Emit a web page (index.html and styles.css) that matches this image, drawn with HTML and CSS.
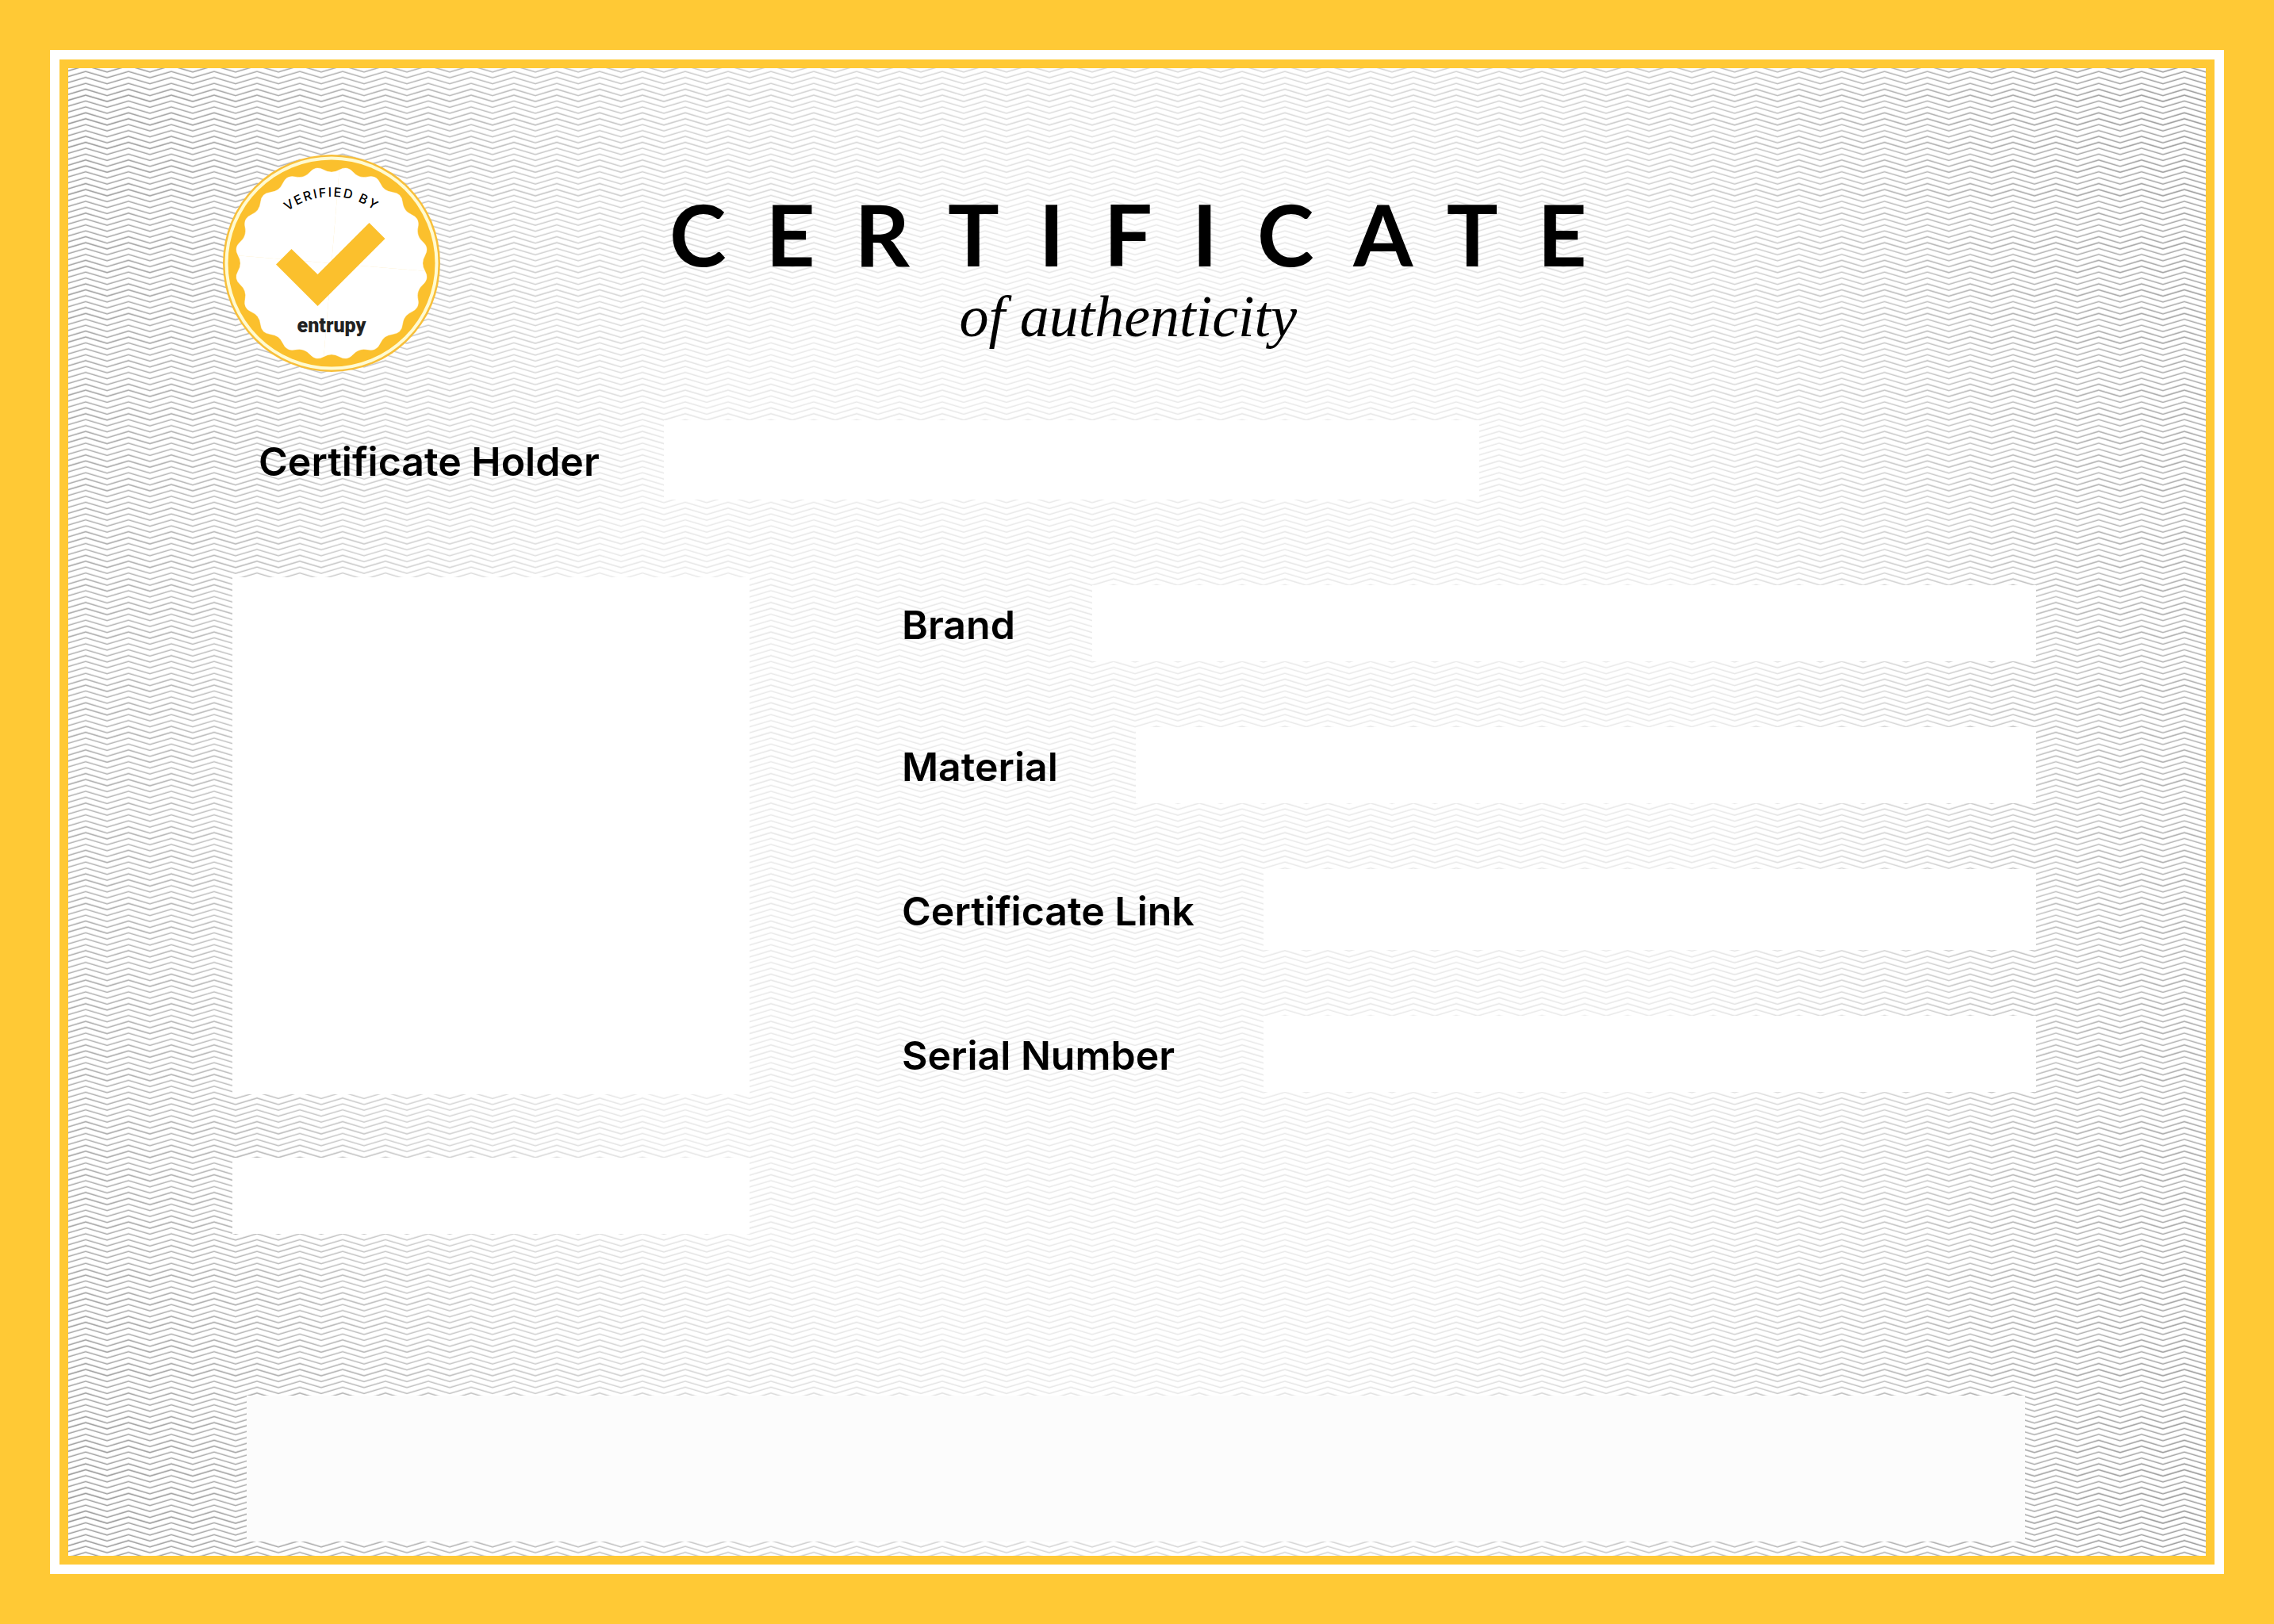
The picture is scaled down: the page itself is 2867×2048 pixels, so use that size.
FILE: index.html
```html
<!DOCTYPE html>
<html lang="en">
<head>
<meta charset="utf-8">
<meta name="viewport" content="width=device-width, initial-scale=1">
<title>Certificate of authenticity</title>
<link rel="stylesheet" href="styles.css">
</head>
<body>
<main class="frame">
  <div class="sheet">
    <svg class="guilloche" aria-hidden="true">
      <defs>
        <pattern id="waves" width="54" height="186" x="22" y="-3.3" patternUnits="userSpaceOnUse">
          <path class="wave" d="M-27 .56l27-8 27 8 27-8 27 8m-108 7.44l27-8 27 8 27-8 27 8m-108 7.44l27-8 27 8 27-8 27 8m-108 7.44l27-8 27 8 27-8 27 8m-108 7.44l27-8 27 8 27-8 27 8m-108 7.44l27-8 27 8 27-8 27 8m-108 7.44l27-8 27 8 27-8 27 8m-108 7.44l27-8 27 8 27-8 27 8m-108 7.44l27-8 27 8 27-8 27 8m-108 7.44l27-8 27 8 27-8 27 8m-108 7.44l27-8 27 8 27-8 27 8m-108 7.44l27-8 27 8 27-8 27 8m-108 7.44l27-8 27 8 27-8 27 8m-108 7.44l27-8 27 8 27-8 27 8m-108 7.44l27-8 27 8 27-8 27 8m-108 7.44l27-8 27 8 27-8 27 8m-108 7.44l27-8 27 8 27-8 27 8m-108 7.44l27-8 27 8 27-8 27 8m-108 7.44l27-8 27 8 27-8 27 8m-108 7.44l27-8 27 8 27-8 27 8m-108 7.44l27-8 27 8 27-8 27 8m-108 7.44l27-8 27 8 27-8 27 8m-108 7.44l27-8 27 8 27-8 27 8m-108 7.44l27-8 27 8 27-8 27 8m-108 7.44l27-8 27 8 27-8 27 8m-108 7.44l27-8 27 8 27-8 27 8m-108 7.44l27-8 27 8 27-8 27 8"/>
        </pattern>
      </defs>
      <rect width="100%" height="100%" fill="url(#waves)"/>
    </svg>

    <header class="masthead">
      <svg class="seal" viewBox="-138 -138 276 276" role="img" aria-label="Verified by Entrupy">
        <defs>
          <path id="scallop" d="M0 0L117.8 9.8Q123.5 19.6 115 27.1Q106.5 34.6 109 45.7Q111.4 56.7 101 61.3Q90.6 65.8 89.5 77.1Q88.4 88.4 77.1 89.5Q65.8 90.6 61.3 101Q56.7 111.4 45.7 109Q34.6 106.5 27.1 115Q19.6 123.5 9.8 117.8Q0 112 -9.8 117.8Z"/>
          <path id="seal-arc" d="M-80 -38.4A93 93 0 0 1 80 -38.4"/>
        </defs>
        <circle r="137" fill="#f8bf3a"/>
        <circle r="134.5" fill="#fffbd2"/>
        <circle r="130.5" fill="#fbc02d"/>
        <g fill="#fff" stroke="#fff" stroke-width=".4">
          <use href="#scallop"/>
          <use href="#scallop" transform="rotate(90)"/>
          <use href="#scallop" transform="rotate(180)"/>
          <use href="#scallop" transform="rotate(270)"/>
        </g>
        <text class="seal-top"><textPath href="#seal-arc" startOffset="50%" text-anchor="middle">VERIFIED BY</textPath></text>
        <path d="M-70 1.5L-50.5 -18L-17.5 14L47.5 -51L67.5 -31L-17.5 54Z" fill="#fbc02d"/>
        <text class="seal-name" y="87" text-anchor="middle">entrupy</text>
      </svg>
      <h1 class="title">
        <span class="title-main">CERTIFICATE</span>
        <span class="title-sub">of authenticity</span>
      </h1>
    </header>

    <dl class="holder field">
      <dt class="label">Certificate Holder</dt>
      <dd class="value"></dd>
    </dl>

    <section class="body">
      <div class="item">
        <div class="photo"></div>
        <div class="caption"></div>
      </div>
      <dl class="details">
        <div class="field brand"><dt class="label">Brand</dt><dd class="value"></dd></div>
        <div class="field material"><dt class="label">Material</dt><dd class="value"></dd></div>
        <div class="field link"><dt class="label">Certificate Link</dt><dd class="value"></dd></div>
        <div class="field serial"><dt class="label">Serial Number</dt><dd class="value"></dd></div>
      </dl>
    </section>

    <footer class="statement"></footer>
  </div>
</main>
</body>
</html>
```
FILE: styles.css
```css
* {
  box-sizing: border-box;
}

body {
  margin: 0;
  min-height: 100vh;
  display: flex;
  background: #ffc935;
  color: #000;
  font-family: Inter, sans-serif;
}

.frame {
  flex: 1;
  display: flex;
  margin: 63px;
  border: 12px solid #fff;
  padding: 11px;
}

.sheet {
  flex: 1;
  position: relative;
  isolation: isolate;
  display: flex;
  flex-direction: column;
  padding-top: 108px;
  background: #fff;
}

/* wavy security print, fading towards the middle */
.guilloche {
  position: absolute;
  inset: 0;
  z-index: -2;
  width: 100%;
  height: 100%;
}

.wave {
  fill: none;
  stroke: #777;
  stroke-width: 1.3;
}

.sheet::before {
  content: "";
  position: absolute;
  inset: 0;
  z-index: -1;
  background: radial-gradient(circle farthest-corner at 50% 49%,
    rgba(255, 255, 255, .8) 44%,
    rgba(255, 255, 255, .6) 60%,
    rgba(255, 255, 255, .36) 75%,
    rgba(255, 255, 255, .08) 100%);
}

.masthead {
  display: flex;
  align-items: flex-start;
  gap: 288px;
  padding-left: 194px;
}

.seal {
  flex: none;
  width: 276px;
  height: 276px;
}

.seal-top {
  font: 500 16px Inter, sans-serif;
  letter-spacing: 2px;
}

.seal-name {
  font: 900 25px Roboto, sans-serif;
  fill: #222;
}

.title {
  margin: 46px 0 0;
  font-weight: 400;
  text-align: center;
}

.title-main {
  display: block;
  margin-right: -50px;
  font: 700 108px/108px Lato, sans-serif;
  letter-spacing: 50px;
}

.title-sub {
  display: block;
  margin-top: 11px;
  font: italic 74px/80px "Liberation Serif", serif;
}

.field {
  display: flex;
  min-height: 96px;
}

.label {
  flex: none;
  align-self: center;
  padding-top: 4px;
  font-size: 50px;
  font-weight: 600;
  line-height: 64px;
  white-space: nowrap;
}

.value {
  flex: 1;
  margin: 0;
  background: #fff;
}

.holder {
  min-height: 100px;
  margin: 60px 916px 0 240px;
}

.holder .label {
  width: 511px;
}

.body {
  display: grid;
  grid-template-columns: 652px 1fr;
  gap: 192px;
  margin-top: 98px;
  padding: 0 214px 0 207px;
}

.photo {
  aspect-ratio: 1;
  background: #fff;
}

.caption {
  height: 96px;
  margin-top: 80px;
  background: #fff;
}

.details {
  display: flex;
  flex-direction: column;
  gap: 83px;
  margin: 10px 0 0;
}

.brand .label {
  width: 240px;
}

.material .label {
  width: 295px;
}

.link {
  min-height: 102px;
}

.link .label,
.serial .label {
  width: 456px;
}

.statement {
  height: 184px;
  margin: 204px 228px 18px 225px;
  background: #fcfcfc;
}
```
